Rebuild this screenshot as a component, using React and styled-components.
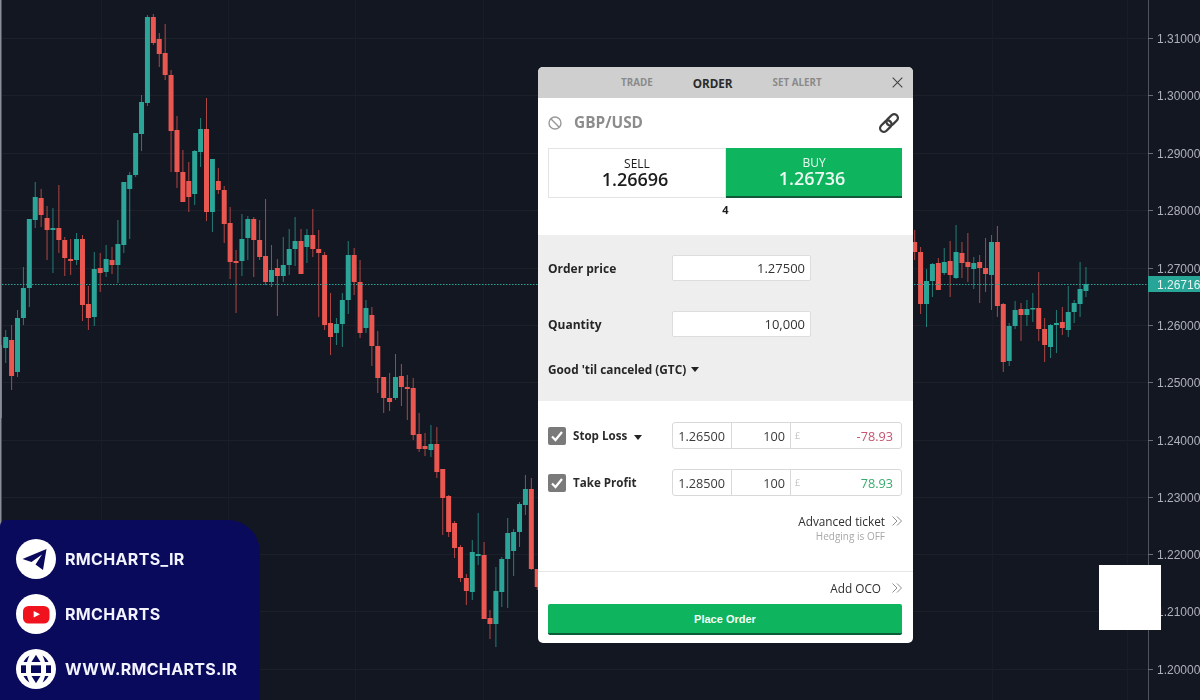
import React from "react";
import styled, { createGlobalStyle } from "styled-components";

const Global = createGlobalStyle`
  html, body { margin: 0; padding: 0; background: #131722; }
  * { box-sizing: border-box; }
`;

const T = "t", R = "r";
const leftCandles = [
  [T,330,337,348,363],[R,325,340,376,390],[T,310,318,372,377],[T,267,288,318,325],[T,219,219,288,307],
  [T,182,197,220,228],[R,189,198,215,227],[R,206,218,230,260],[T,208,228,230,273],[R,185,228,240,253],
  [R,237,240,258,276],[R,239,259,261,275],[T,233,239,260,265],[R,235,239,305,321],[R,286,304,318,330],
  [T,252,269,317,326],[R,253,268,273,292],[T,245,259,272,277],[R,247,260,265,274],[T,220,244,265,283],
  [T,182,182,245,253],[T,172,175,189,239],[T,133,133,175,177],[T,95,102,134,151],[T,15,17,103,106],
  [R,14,17,43,45],[R,33,39,54,67],[R,24,53,75,80],[R,70,75,131,172],[R,116,130,172,188],
  [R,150,172,202,202],[R,162,181,197,212],[T,150,151,194,205],[T,118,129,152,167],[R,98,129,212,221],
  [T,159,159,212,232],[R,168,181,190,194],[R,186,190,224,243],[R,207,223,262,279],[R,250,261,263,313],
  [T,214,239,261,276],[T,216,219,238,260],[R,217,219,240,277],[R,220,240,257,260],[R,199,256,282,285],
  [T,245,270,282,287],[R,259,268,276,316],[T,237,265,276,282],[T,229,249,265,275],[T,217,241,249,266],
  [R,229,241,274,274],[T,229,235,247,263],[R,209,235,249,257],[R,230,249,253,317],[R,252,255,325,330],
  [R,293,323,337,355],[T,318,324,333,345],[T,293,300,324,347],[T,241,255,300,314],[R,248,255,282,295],
  [R,260,282,333,338],[T,300,308,328,333],[R,307,315,346,366],[R,331,346,378,393],[R,377,377,398,413],
  [R,373,398,402,411],[T,354,377,398,400],[R,364,376,387,406],[R,375,387,389,420],[R,378,388,435,440],
  [R,413,434,449,452],[R,433,446,449,456],[T,425,444,450,457],[R,427,444,472,478],[R,469,469,498,535],
  [R,495,496,532,537],[R,521,523,548,558],[R,545,547,578,582],[R,574,578,591,605],[T,540,552,592,600],
  [T,513,554,556,565],[R,542,555,619,619],[R,610,618,624,639],[T,567,591,624,647],[T,557,559,592,607],
  [T,518,533,559,608],[T,529,532,551,576],[T,502,504,532,547],[T,475,489,505,515],[R,478,489,569,570],
  [R,569,569,587,590],
];
const rightCandles = [
  [R,230,242,252,260],[R,247,252,304,314],[T,269,281,304,327],[T,263,264,281,297],[R,258,263,290,290],
  [T,248,262,273,275],[R,241,261,275,297],[T,225,252,278,279],[R,242,253,263,278],[R,233,262,267,282],
  [T,257,263,269,289],[R,255,262,268,303],[R,238,268,274,292],[T,235,242,275,310],[R,226,242,306,317],
  [R,303,304,362,372],[T,323,326,361,366],[T,301,310,326,329],[R,303,309,315,341],[T,300,309,315,326],
  [T,293,308,309,322],[R,272,308,329,341],[R,318,329,345,362],[T,324,325,347,358],[T,310,323,325,353],
  [R,307,322,328,335],[T,286,312,330,337],[T,300,303,312,323],[T,262,289,304,317],[T,267,284,291,297],
];

const prices = ["1.31000","1.30000","1.29000","1.28000","1.27000","1.26000","1.25000","1.24000","1.23000","1.22000","1.21000","1.20000"];
const gridY = [38,95,153,210,268,325,382,440,497,554,611,669];
const gridX = [101,228,355,483,992,1127];
const COLORS = { t: "#2aa598", r: "#ea5750" };

const Stage = styled.div`
  position: relative;
  width: 1200px;
  height: 700px;
  overflow: hidden;
  background: #131722;
  font-family: "Open Sans", sans-serif;
`;
const ChartSvg = styled.svg`
  display: block;
`;
const Candles = styled.g`
  filter: blur(0.35px);
`;
const AxisText = styled.text`
  font-family: "Liberation Sans", sans-serif;
  font-size: 12px;
  fill: ${p => (p.$active ? "#e8f5f3" : "#aeb1b9")};
`;

const Candle = ({ c, x }) => {
  const [k, wt, bt, bb, wb] = c;
  return (
    <g fill={COLORS[k]}>
      <rect x={x - 0.5} y={wt} width="1" height={wb - wt} opacity="0.72" />
      <rect x={x - 2.5} y={bt} width="5" height={Math.max(bb - bt, 1.5)} />
    </g>
  );
};

const Chart = () => (
  <ChartSvg width="1200" height="700" viewBox="0 0 1200 700">
    <rect x="0" y="0" width="1.5" height="700" fill="#8b8e96" />
    <rect x="1" y="345" width="1" height="73" fill="#2aa598" />
    {gridY.map(y => <rect key={y} x="2" y={y} width="1146" height="1" fill="#1c2029" />)}
    {gridX.map(x => <rect key={x} x={x} y="0" width="1" height="700" fill="#191d27" />)}
    <Candles>
      {leftCandles.map((c, i) => <Candle key={i} c={c} x={5.7 + 5.906 * i} />)}
      {rightCandles.map((c, i) => <Candle key={i} c={c} x={914.7 + 5.906 * i} />)}
    </Candles>
    <line x1="2" y1="284.5" x2="1148" y2="284.5" stroke="#2aa598" strokeWidth="1" strokeDasharray="1.5 1.5" />
    <rect x="1148" y="0" width="1" height="700" fill="#50535c" />
    {gridY.map((y, i) => (
      <g key={y}>
        <rect x="1148" y={y} width="5" height="1" fill="#6a6d75" />
        <AxisText x="1157" y={y + 4.5}>{prices[i]}</AxisText>
      </g>
    ))}
    <rect x="1148" y="276" width="52" height="16" fill="#27a597" />
    <AxisText $active x="1157" y="288.5">1.26716</AxisText>
  </ChartSvg>
);

const Panel = styled.section`
  position: absolute;
  left: 538px;
  top: 67px;
  width: 375px;
  height: 576px;
  display: flex;
  flex-direction: column;
  background: #fff;
  border-radius: 5px;
  overflow: hidden;
`;
const TabBar = styled.header`
  height: 31px;
  flex: none;
  display: flex;
  align-items: center;
  padding: 0 10px 0 83px;
  gap: 40px;
  background: #cfcfcf;
`;
const Tab = styled.span`
  font-size: ${p => (p.$active ? "11.7px" : "9.8px")};
  font-weight: 700;
  color: ${p => (p.$active ? "#2a2a2a" : "#8a8a8a")};
`;
const CloseButton = styled.span`
  margin-left: auto;
  display: flex;
  color: #444;
`;
const Top = styled.div`
  height: 137px;
  flex: none;
  padding: 0 11px 0 10px;
  display: flex;
  flex-direction: column;
`;
const NameRow = styled.div`
  height: 50px;
  flex: none;
  display: flex;
  align-items: center;
  padding-bottom: 1px;
`;
const Symbol = styled.span`
  margin-left: 12px;
  font-size: 15.4px;
  font-weight: 700;
  color: #8c8c8c;
`;
const LinkWrap = styled.span`
  margin-left: auto;
  margin-right: 3px;
  display: flex;
  color: #3d3d3d;
`;
const Quotes = styled.div`
  height: 50px;
  flex: none;
  display: flex;
`;
const Quote = styled.div`
  flex: 1;
  display: flex;
  flex-direction: column;
  align-items: center;
  justify-content: center;
  background: ${p => (p.$buy ? "#0eb45e" : "#fff")};
  color: ${p => (p.$buy ? "#eafaf1" : "#1d1d1d")};
  border: ${p => (p.$buy ? "0" : "1px solid #e4e4e4")};
  border-bottom: ${p => (p.$buy ? "2px solid #12593a" : "1px solid #e4e4e4")};
`;
const QuoteLabel = styled.span`
  font-size: 12px;
  line-height: 12px;
`;
const QuotePrice = styled.span`
  font-size: 18px;
  font-weight: 600;
  line-height: 18px;
  margin-right: 4px;
`;
const Spread = styled.div`
  text-align: center;
  padding-left: 1px;
  margin-top: 5px;
  font-size: 11px;
  line-height: 14px;
  font-weight: 700;
  color: #1d1d1d;
`;
const FormArea = styled.div`
  height: 166px;
  flex: none;
  background: #eeeeee;
  padding: 20px 10px 0;
  display: flex;
  flex-direction: column;
  gap: 30px;
`;
const FormRow = styled.div`
  display: flex;
  align-items: center;
  height: 26px;
`;
const Label = styled.span`
  width: 124px;
  flex: none;
  font-size: 12px;
  font-weight: 700;
  color: #262626;
`;
const Field = styled.div`
  width: 139px;
  height: 26px;
  background: #fff;
  border: 1px solid #dddddd;
  border-radius: 2px;
  display: flex;
  align-items: center;
  justify-content: flex-end;
  padding-right: 5px;
  font-size: 13px;
  color: #333;
`;
const Expiry = styled.div`
  margin-top: -6px;
  display: flex;
  align-items: center;
  gap: 5px;
  font-size: 11.8px;
  font-weight: 700;
  color: #262626;
`;
const Caret = styled.i`
  display: block;
  width: 0;
  height: 0;
  border-left: 4px solid transparent;
  border-right: 4px solid transparent;
  border-top: 5px solid #222;
  margin-top: ${p => p.$drop || "0"};
`;
const Stops = styled.div`
  flex: 1;
  padding: 21px 11px 0 10px;
  display: flex;
  flex-direction: column;
  gap: 20px;
`;
const StopRow = styled.div`
  height: 27px;
  display: flex;
  align-items: center;
`;
const StopName = styled.div`
  width: 124px;
  flex: none;
  display: flex;
  align-items: center;
  gap: 7px;
  font-size: 11.6px;
  font-weight: 700;
  color: #2a2a2a;
`;
const Check = styled.span`
  width: 18px;
  height: 18px;
  border-radius: 2px;
  background: #7a7a7a;
  display: flex;
  align-items: center;
  justify-content: center;
  flex: none;
`;
const Segments = styled.div`
  flex: 1;
  height: 27px;
  display: grid;
  grid-template-columns: 58px 59px 1fr;
  background: #fff;
  border: 1px solid #d9d9d9;
  border-radius: 3px;
  font-size: 12.7px;
  color: #3a3a3a;
`;
const Seg = styled.span`
  display: flex;
  align-items: center;
  justify-content: flex-end;
  padding-right: ${p => (p.$first ? "6px" : "5px")};
  border-left: ${p => (p.$first ? "0" : "1px solid #d9d9d9")};
`;
const Money = styled(Seg)`
  justify-content: space-between;
  padding: 0 8px 0 4px;
`;
const Pound = styled.span`
  font-size: 9px;
  color: #c4c4c4;
`;
const Amount = styled.span`
  color: ${p => (p.$loss ? "#c4566e" : "#3aab6e")};
`;
const Advanced = styled.div`
  margin-top: -3px;
  display: flex;
  flex-direction: column;
  align-items: flex-end;
`;
const LinkLine = styled.div`
  display: flex;
  align-items: center;
  gap: ${p => p.$gap}px;
  font-size: 11.8px;
  line-height: 16px;
  color: #2f2f2f;
`;
const Hedging = styled.div`
  font-size: 10px;
  line-height: 14px;
  color: #a8a8a8;
  margin-right: 17px;
`;
const Footer = styled.div`
  height: 72px;
  flex: none;
  border-top: 1px solid #e6e6e6;
  padding: 8px 11px 8px 10px;
  display: flex;
  flex-direction: column;
  align-items: flex-end;
  gap: 8px;
`;
const PlaceOrder = styled.div`
  width: 100%;
  height: 31px;
  flex: none;
  background: #0eb45e;
  border-bottom: 2px solid #0d5c39;
  border-radius: 2px;
  display: flex;
  align-items: center;
  justify-content: center;
  font-family: "Liberation Sans", sans-serif;
  font-size: 11px;
  font-weight: 700;
  color: #f3fff8;
`;

const Social = styled.aside`
  position: absolute;
  left: 0;
  bottom: 0;
  width: 260px;
  height: 180px;
  background: #0a0a5c;
  border-radius: 6px 32px 0 0;
  padding: 19px 0 0 16px;
  display: flex;
  flex-direction: column;
  gap: 15px;
`;
const SocialRow = styled.div`
  display: flex;
  align-items: center;
  gap: 9px;
  height: 40px;
  font-family: Inter, sans-serif;
  font-size: 16px;
  font-weight: 700;
  letter-spacing: 0.33px;
  color: #f2f3ff;
`;
const Blank = styled.div`
  position: absolute;
  left: 1099px;
  top: 565px;
  width: 62px;
  height: 65px;
  background: #fff;
`;

const Chevrons = () => (
  <svg width="10" height="12" viewBox="0 0 10 12" fill="none" stroke="#8f8f8f" strokeWidth="1">
    <path d="M.5 1.500 5 6 .5 10.500M5 1.500 9.500 6 5 10.500" />
  </svg>
);
const Tick = () => (
  <svg width="14" height="14" viewBox="0 0 14 14" fill="none" stroke="#fff" strokeWidth="2.2">
    <path d="M2 7.500 5.500 11 12 3" />
  </svg>
);

const App = () => (
  <Stage>
    <Global />
    <Chart />
    <Panel>
      <TabBar>
        <Tab>TRADE</Tab>
        <Tab $active>ORDER</Tab>
        <Tab>SET ALERT</Tab>
        <CloseButton>
          <svg width="11" height="11" viewBox="0 0 11 11" stroke="currentColor" strokeWidth="1.1">
            <path d="M.7.7l9.6 9.6M10.3.7.7 10.3" />
          </svg>
        </CloseButton>
      </TabBar>
      <Top>
        <NameRow>
          <svg width="14" height="14" viewBox="0 0 14 14" fill="none" stroke="#999" strokeWidth="1.4">
            <circle cx="7" cy="7" r="6" />
            <path d="M2.800 2.800l8.400 8.400" />
          </svg>
          <Symbol>GBP/USD</Symbol>
          <LinkWrap>
            <svg width="20" height="20" viewBox="0 0 20 20" fill="none" stroke="currentColor" strokeWidth="2.3">
              <g transform="rotate(-45 10 10)">
                <rect x="-1" y="6.300" width="13" height="7.400" rx="3.700" />
                <rect x="8" y="6.300" width="13" height="7.400" rx="3.700" />
              </g>
            </svg>
          </LinkWrap>
        </NameRow>
        <Quotes>
          <Quote>
            <QuoteLabel>SELL</QuoteLabel>
            <QuotePrice>1.26696</QuotePrice>
          </Quote>
          <Quote $buy>
            <QuoteLabel>BUY</QuoteLabel>
            <QuotePrice>1.26736</QuotePrice>
          </Quote>
        </Quotes>
        <Spread>4</Spread>
      </Top>
      <FormArea>
        <FormRow>
          <Label>Order price</Label>
          <Field>1.27500</Field>
        </FormRow>
        <FormRow>
          <Label>Quantity</Label>
          <Field>10,000</Field>
        </FormRow>
        <Expiry>
          Good 'til canceled (GTC) <Caret />
        </Expiry>
      </FormArea>
      <Stops>
        <StopRow>
          <StopName>
            <Check><Tick /></Check>
            Stop Loss <Caret $drop="3px" />
          </StopName>
          <Segments>
            <Seg $first>1.26500</Seg>
            <Seg>100</Seg>
            <Money><Pound>£</Pound><Amount $loss>-78.93</Amount></Money>
          </Segments>
        </StopRow>
        <StopRow>
          <StopName>
            <Check><Tick /></Check>
            Take Profit
          </StopName>
          <Segments>
            <Seg $first>1.28500</Seg>
            <Seg>100</Seg>
            <Money><Pound>£</Pound><Amount>78.93</Amount></Money>
          </Segments>
        </StopRow>
        <Advanced>
          <LinkLine $gap={7}>Advanced ticket <Chevrons /></LinkLine>
          <Hedging>Hedging is OFF</Hedging>
        </Advanced>
      </Stops>
      <Footer>
        <LinkLine $gap={11}>Add OCO <Chevrons /></LinkLine>
        <PlaceOrder>Place Order</PlaceOrder>
      </Footer>
    </Panel>
    <Social>
      <SocialRow>
        <svg width="40" height="40" viewBox="0 0 40 40">
          <circle cx="20" cy="20" r="20" fill="#fff" />
          <path d="M6.500 20 30.500 10 27 31 19.500 25.500 26 15.500 15.500 23Z" fill="#0a0a5c" />
        </svg>
        RMCHARTS_IR
      </SocialRow>
      <SocialRow>
        <svg width="40" height="40" viewBox="0 0 40 40">
          <circle cx="20" cy="20" r="20" fill="#fff" />
          <rect x="7" y="12" width="26.500" height="17.500" rx="5.500" fill="#f0131e" />
          <path d="M17.700 17v6.500l6.300-3.250Z" fill="#fff" />
        </svg>
        RMCHARTS
      </SocialRow>
      <SocialRow>
        <svg width="40" height="40" viewBox="0 0 40 40">
          <circle cx="20" cy="20" r="20" fill="#fff" />
          <g fill="#0a0a5c">
            <rect x="15" y="16.300" width="10" height="7.700" />
            <rect x="5" y="16.300" width="5" height="7.700" />
            <rect x="30" y="16.300" width="5" height="7.700" />
            <path d="M20 5.700 24.500 13h-9Z" />
            <path d="M20 34.300 24.500 27h-9Z" />
            <path d="M7.500 13c1.500-3 3.500-5 6-6.500-1 2-2 4.500-2.500 6.500Z" />
            <path d="M32.500 13c-1.500-3-3.500-5-6-6.500 1 2 2 4.500 2.500 6.500Z" />
            <path d="M7.500 27c1.500 3 3.500 5 6 6.500-1-2-2-4.500-2.500-6.500Z" />
            <path d="M32.500 27c-1.500 3-3.500 5-6 6.500 1-2 2-4.500 2.500-6.500Z" />
          </g>
        </svg>
        WWW.RMCHARTS.IR
      </SocialRow>
    </Social>
    <Blank />
  </Stage>
);

export default App;
